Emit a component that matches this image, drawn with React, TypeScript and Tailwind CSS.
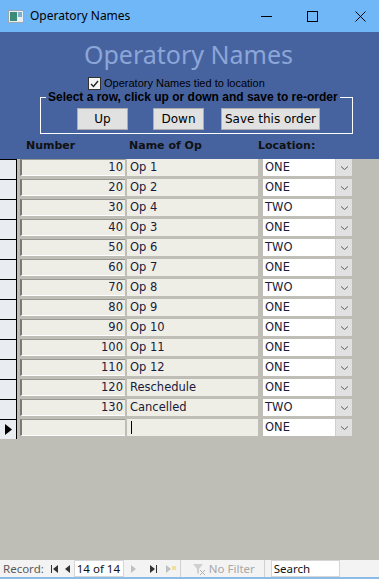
import React from "react";

const rows: [string, string, string][] = [
  ["10", "Op 1", "ONE"],
  ["20", "Op 2", "ONE"],
  ["30", "Op 4", "TWO"],
  ["40", "Op 3", "ONE"],
  ["50", "Op 6", "TWO"],
  ["60", "Op 7", "ONE"],
  ["70", "Op 8", "TWO"],
  ["80", "Op 9", "ONE"],
  ["90", "Op 10", "ONE"],
  ["100", "Op 11", "ONE"],
  ["110", "Op 12", "ONE"],
  ["120", "Reschedule", "ONE"],
  ["130", "Cancelled", "TWO"],
];

const field = "font-['DejaVu_Sans',sans-serif] text-[11.5px] text-[#1a1a3a]";

function Combo({ value }: { value: string }) {
  return (
    <div className="flex h-[17px] w-[89px] ml-[5px]">
      <div className={`flex-1 bg-white flex items-center pl-[2px] ${field}`}>{value}</div>
      <div className="w-[17px] bg-[#e1e1e1] flex items-center justify-center border-l border-[#d0d0d0]">
        <svg width="9" height="6" viewBox="0 0 9 6">
          <path d="M1 1.5 L4.5 4.5 L8 1.5" stroke="#606060" strokeWidth="1" fill="none" />
        </svg>
      </div>
    </div>
  );
}

function Row({ num, name, loc, current }: { num: string; name: string; loc: string; current?: boolean }) {
  return (
    <div className="flex h-[20px]">
      <div className="w-[17px] bg-[#e9ecf1] border-r border-t border-black flex items-center justify-center">
        {current && (
          <svg width="7" height="11" viewBox="0 0 7 11">
            <path d="M0 0 L7 5.5 L0 11 Z" fill="#000" />
          </svg>
        )}
      </div>
      <div className="flex items-start">
        <div
          className={`ml-[3px] w-[105px] h-[17px] bg-[#efeee6] border-l-2 border-t-[1px] border-b border-l-[#7a7a76] border-t-[#9a9a94] border-b-white flex items-center justify-end pr-[2px] ${field}`}
        >
          {num}
        </div>
        <div className={`ml-[2px] w-[131px] h-[17px] bg-[#efeee6] flex items-center pl-[3px] ${field}`}>
          {current ? <span className="inline-block w-px h-[13px] bg-black ml-[1px]" /> : name}
        </div>
        <Combo value={loc} />
      </div>
    </div>
  );
}

export default function App() {
  return (
    <div className="w-[379px] h-[579px] flex flex-col bg-[#bfbeb6] overflow-hidden font-['DejaVu_Sans',sans-serif]">
      {/* Title bar */}
      <div className="h-[32px] bg-[#70b7f7] flex items-center shrink-0">
        <svg className="ml-[8px]" width="16" height="13" viewBox="0 0 16 13">
          <rect x="0.5" y="0.5" width="15" height="12" fill="#e8eef4" stroke="#9aa8b4" />
          <rect x="2" y="2" width="7" height="9" fill="#3c8a78" />
          <rect x="10" y="2" width="4" height="5" fill="#7fb0c8" />
        </svg>
        <span className="ml-[6px] text-[12px] text-black font-['Noto_Sans',sans-serif]">Operatory Names</span>
        <div className="flex-1" />
        <svg className="mr-[35px]" width="11" height="11" viewBox="0 0 11 11">
          <path d="M0 5.5 H11" stroke="#000" strokeWidth="1" />
        </svg>
        <svg className="mr-[37px]" width="11" height="11" viewBox="0 0 11 11">
          <rect x="0.5" y="0.5" width="10" height="10" stroke="#000" fill="none" />
        </svg>
        <svg className="mr-[13px]" width="11" height="11" viewBox="0 0 11 11">
          <path d="M0.5 0.5 L10.5 10.5 M10.5 0.5 L0.5 10.5" stroke="#000" strokeWidth="1" />
        </svg>
      </div>

      {/* Header */}
      <div className="bg-[#4663a0] h-[127px] shrink-0 flex flex-col">
        <div className="text-center text-[25px] leading-[30px] text-[#8ca6d8] mt-[7px] pr-[2px] font-['Noto_Sans',sans-serif]">
          Operatory Names
        </div>
        <div className="flex items-center ml-[88px] mt-[8px] h-[13px]">
          <div className="w-[13px] h-[13px] bg-[#f4f4f4] border border-[#333] flex items-center justify-center">
            <svg width="9" height="8" viewBox="0 0 9 8">
              <path d="M1 4 L3.5 6.5 L8 1" stroke="#222" strokeWidth="1.4" fill="none" />
            </svg>
          </div>
          <span className="ml-[3px] text-[11px] text-black font-['Liberation_Sans',sans-serif] whitespace-nowrap">
            Operatory Names tied to location
          </span>
        </div>
        <div className="relative ml-[40px] mt-[7px] w-[313px] h-[37px] border border-white">
          <span className="absolute -top-[8px] left-[5px] px-[2px] bg-[#4663a0] text-[12px] leading-[14px] font-bold text-black whitespace-nowrap font-['Liberation_Sans',sans-serif]">
            Select a row, click up or down and save to re-order
          </span>
          <div className="flex mt-[10px]">
            <button className="ml-[36px] w-[51px] h-[22px] bg-[#e1e1e1] border border-[#adadad] text-[12px] text-black">
              Up
            </button>
            <button className="ml-[25px] w-[51px] h-[22px] bg-[#e1e1e1] border border-[#adadad] text-[12px] text-black">
              Down
            </button>
            <button className="ml-[17px] w-[99px] h-[22px] bg-[#e1e1e1] border border-[#adadad] text-[12px] text-black">
              Save this order
            </button>
          </div>
        </div>
        <div className="flex mt-[4px] text-[11px] leading-[16px] font-bold text-[#111]">
          <span className="ml-[26px] w-[103px]">Number</span>
          <span className="w-[129px]">Name of Op</span>
          <span>Location:</span>
        </div>
      </div>

      {/* Rows */}
      <div className="flex flex-col shrink-0">
        {rows.map(([n, name, loc]) => (
          <Row key={n} num={n} name={name} loc={loc} />
        ))}
        <Row num="" name="" loc="ONE" current />
      </div>
      <div className="flex-1" />

      {/* Status bar */}
      <div className="h-[19px] shrink-0 bg-[#f3f3f3] border-b-2 border-[#8cbbea] flex items-center text-[11.5px] text-[#5a5a5a] font-['Noto_Sans',sans-serif]">
        <span className="ml-[3px]">Record:</span>
        <svg className="ml-[7px]" width="8" height="8" viewBox="0 0 8 8">
          <rect x="0" y="0" width="1" height="8" fill="#333" />
          <path d="M7 0 L2 4 L7 8 Z" fill="#333" />
        </svg>
        <svg className="ml-[6px]" width="5" height="8" viewBox="0 0 5 8">
          <path d="M5 0 L0 4 L5 8 Z" fill="#333" />
        </svg>
        <div className="ml-[4px] w-[50px] h-[17px] bg-white border border-[#d6d6d6] text-[#111] pl-[2px] leading-[15px]">
          14 of 14
        </div>
        <svg className="ml-[7px]" width="5" height="8" viewBox="0 0 5 8">
          <path d="M0 0 L5 4 L0 8 Z" fill="#c0c0c0" />
        </svg>
        <svg className="ml-[14px]" width="8" height="8" viewBox="0 0 8 8">
          <path d="M0 0 L5 4 L0 8 Z" fill="#333" />
          <rect x="6" y="0" width="1" height="8" fill="#333" />
        </svg>
        <svg className="ml-[8px]" width="10" height="8" viewBox="0 0 10 8">
          <path d="M0 0 L5 4 L0 8 Z" fill="#c0c0c0" />
          <rect x="6" y="1" width="4" height="4" fill="#f0e0a0" />
        </svg>
        <div className="ml-[4px] h-[17px] w-px bg-[#d0d0d0]" />
        <svg className="ml-[12px]" width="13" height="12" viewBox="0 0 13 12">
          <path d="M0 1 H10 L6 6 V11 L4 10 V6 Z" fill="#d0d0d0" />
          <path d="M7 7 L12 12 M12 7 L7 12" stroke="#b0b0b0" />
        </svg>
        <span className="ml-[3px] text-[#a8a8a8]">No Filter</span>
        <div className="ml-[9px] h-[17px] w-px bg-[#d0d0d0]" />
        <div className="ml-[6px] w-[69px] h-[17px] bg-white border border-[#d6d6d6] text-[#111] pl-[2px] leading-[15px]">
          Search
        </div>
      </div>
    </div>
  );
}
